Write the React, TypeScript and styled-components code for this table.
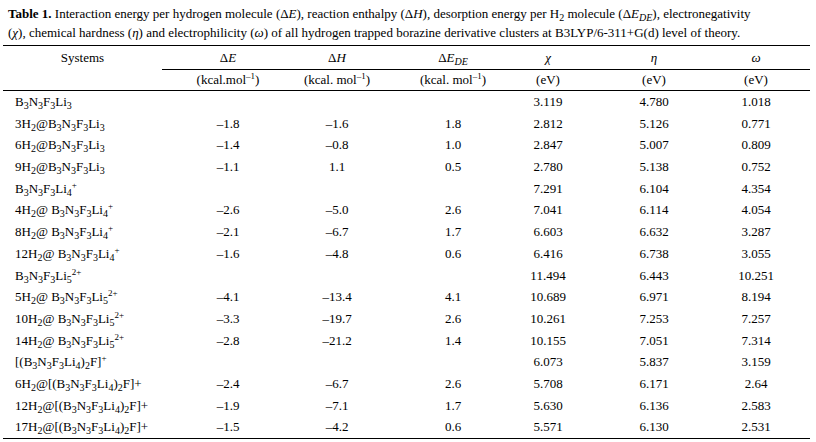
import React from "react";
import styled, { createGlobalStyle } from "styled-components";

const GlobalStyle = createGlobalStyle`
  html, body {
    margin: 0;
    padding: 0;
    background: #fff;
  }
  body {
    font-family: "Liberation Serif", "Times New Roman", serif;
    color: #000;
  }
`;

// column widths picked so each data column is centred where the reference has it
const COLS = "159px 132px 86px 146px 44px 168px 36px 36px";

const Page = styled.div`
  width: 816px;
  height: 442px;
  padding-top: 4px;
  box-sizing: border-box;
`;

const Caption = styled.p`
  margin: 0 0 0 8px;
  font-size: 13px;
  line-height: 19px;
  white-space: nowrap;
`;

const Table = styled.div`
  margin: 3px 0 0 3px;
  width: 807px;
  border-top: 1px solid #000;
  font-size: 13px;
`;

const Row = styled.div<{ $h: number }>`
  display: grid;
  grid-template-columns: ${COLS};
  height: ${(p) => p.$h}px;
  line-height: ${(p) => p.$h}px;
`;

const HeadCell = styled.div<{ $ruled?: boolean }>`
  text-align: center;
  white-space: nowrap;
  box-sizing: border-box;
  border-bottom: ${(p) => (p.$ruled ? "1px solid #000" : "none")};
`;

const Body = styled.div`
  border-top: 1px solid #000;
  border-bottom: 1px solid #000;
`;

const Label = styled.div`
  padding-left: 12px;
  white-space: nowrap;
`;

const Num = styled.div`
  text-align: center;
  white-space: nowrap;
`;

const Sub = styled.sub`
  font-size: 10px;
  line-height: 0;
  vertical-align: -3px;
`;

const Sup = styled.sup`
  font-size: 9px;
  line-height: 0;
  vertical-align: 5px;
`;

const I = styled.i`
  font-style: italic;
`;

const B = styled.b`
  font-weight: bold;
`;

const Core = ({ li }: { li: number }) => (
  <>
    B<Sub>3</Sub>N<Sub>3</Sub>F<Sub>3</Sub>Li<Sub>{li}</Sub>
  </>
);

const Dimer = () => (
  <>
    [(B<Sub>3</Sub>N<Sub>3</Sub>F<Sub>3</Sub>Li<Sub>4</Sub>)<Sub>2</Sub>F]
  </>
);

const H2 = ({ n }: { n: number }) => (
  <>
    {n}H<Sub>2</Sub>@
  </>
);

type Entry = {
  label: React.ReactNode;
  vals: string[];
};

const rows: Entry[] = [
  { label: <Core li={3} />, vals: ["", "", "", "3.119", "4.780", "1.018"] },
  { label: <><H2 n={3} /><Core li={3} /></>, vals: ["–1.8", "–1.6", "1.8", "2.812", "5.126", "0.771"] },
  { label: <><H2 n={6} /><Core li={3} /></>, vals: ["–1.4", "–0.8", "1.0", "2.847", "5.007", "0.809"] },
  { label: <><H2 n={9} /><Core li={3} /></>, vals: ["–1.1", "1.1", "0.5", "2.780", "5.138", "0.752"] },
  { label: <><Core li={4} /><Sup>+</Sup></>, vals: ["", "", "", "7.291", "6.104", "4.354"] },
  { label: <><H2 n={4} /> <Core li={4} /><Sup>+</Sup></>, vals: ["–2.6", "–5.0", "2.6", "7.041", "6.114", "4.054"] },
  { label: <><H2 n={8} /> <Core li={4} /><Sup>+</Sup></>, vals: ["–2.1", "–6.7", "1.7", "6.603", "6.632", "3.287"] },
  { label: <><H2 n={12} /> <Core li={4} /><Sup>+</Sup></>, vals: ["–1.6", "–4.8", "0.6", "6.416", "6.738", "3.055"] },
  { label: <><Core li={5} /><Sup>2+</Sup></>, vals: ["", "", "", "11.494", "6.443", "10.251"] },
  { label: <><H2 n={5} /> <Core li={5} /><Sup>2+</Sup></>, vals: ["–4.1", "–13.4", "4.1", "10.689", "6.971", "8.194"] },
  { label: <><H2 n={10} /> <Core li={5} /><Sup>2+</Sup></>, vals: ["–3.3", "–19.7", "2.6", "10.261", "7.253", "7.257"] },
  { label: <><H2 n={14} /> <Core li={5} /><Sup>2+</Sup></>, vals: ["–2.8", "–21.2", "1.4", "10.155", "7.051", "7.314"] },
  { label: <><Dimer /><Sup>+</Sup></>, vals: ["", "", "", "6.073", "5.837", "3.159"] },
  { label: <><H2 n={6} /><Dimer />+</>, vals: ["–2.4", "–6.7", "2.6", "5.708", "6.171", "2.64"] },
  { label: <><H2 n={12} /><Dimer />+</>, vals: ["–1.9", "–7.1", "1.7", "5.630", "6.136", "2.583"] },
  { label: <><H2 n={17} /><Dimer />+</>, vals: ["–1.5", "–4.2", "0.6", "5.571", "6.130", "2.531"] },
];

const MolUnit = ({ spaced }: { spaced?: boolean }) => (
  <>
    (kcal.{spaced ? " " : ""}mol<Sup>–1</Sup>)
  </>
);

export default function App() {
  return (
    <Page>
      <GlobalStyle />
      <Caption>
        <B>Table 1.</B> Interaction energy per hydrogen molecule (Δ<I>E</I>), reaction enthalpy (Δ<I>H</I>),
        desorption energy per H<Sub>2</Sub> molecule (Δ<I>E<Sub>DE</Sub></I>), electronegativity
        <br />
        (<I>χ</I>), chemical hardness (<I>η</I>) and electrophilicity (<I>ω</I>) of all hydrogen trapped
        borazine derivative clusters at B3LYP/6-311+G(d) level of theory.
      </Caption>
      <Table>
        <Row $h={23}>
          <HeadCell>Systems</HeadCell>
          <HeadCell $ruled>
            Δ<I>E</I>
          </HeadCell>
          <HeadCell $ruled>
            Δ<I>H</I>
          </HeadCell>
          <HeadCell $ruled>
            Δ<I>E<Sub>DE</Sub></I>
          </HeadCell>
          <HeadCell $ruled>
            <I>χ</I>
          </HeadCell>
          <HeadCell $ruled>
            <I>η</I>
          </HeadCell>
          <HeadCell $ruled>
            <I>ω</I>
          </HeadCell>
          <HeadCell $ruled />
        </Row>
        <Row $h={21}>
          <HeadCell />
          <HeadCell>
            <MolUnit />
          </HeadCell>
          <HeadCell>
            <MolUnit spaced />
          </HeadCell>
          <HeadCell>
            <MolUnit spaced />
          </HeadCell>
          <HeadCell>(eV)</HeadCell>
          <HeadCell>(eV)</HeadCell>
          <HeadCell>(eV)</HeadCell>
          <HeadCell />
        </Row>
        <Body>
          {rows.map((r, i) => (
            <Row key={i} $h={21.7}>
              <Label>{r.label}</Label>
              {r.vals.map((v, j) => (
                <Num key={j}>{v}</Num>
              ))}
              <Num />
            </Row>
          ))}
        </Body>
      </Table>
    </Page>
  );
}
